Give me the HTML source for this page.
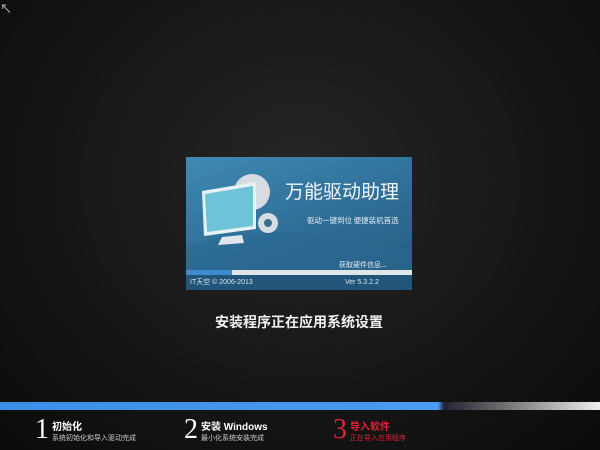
<!DOCTYPE html>
<html><head><meta charset="utf-8"><style>
*{margin:0;padding:0}
body{width:600px;height:450px;overflow:hidden;background:radial-gradient(ellipse at 50% 40%,#262626 0%,#151515 60%,#0b0b0b 100%);position:relative;font-family:"Liberation Sans","Noto Sans CJK SC",sans-serif;color:#fff}
.splash{position:absolute;left:186px;top:157px;width:226px;height:133px;background:linear-gradient(160deg,#3f8ab3 0%,#2f6f98 50%,#25597e 100%);overflow:hidden}
.bar{position:absolute;left:0;top:113px;width:226px;height:5px;background:#dfe6ea}
.bar i{position:absolute;left:0;top:0;width:46px;height:5px;background:#3d8ad0}
.foot{position:absolute;left:0;top:118px;width:226px;height:15px;background:#22557a;font-size:7px;color:#d8e6ef;line-height:15px}
.main{position:absolute;left:215px;top:312px;font-size:14px;font-weight:bold;color:#f2f2f2;white-space:nowrap}
.pb{position:absolute;left:0;top:402px;width:600px;height:8px;background:linear-gradient(90deg,#3a8fe6 0,#4a9bf0 73%,#223 74%,#777 85%,#eee 100%)}
.step{position:absolute;top:416px}
.n{position:absolute;font-family:"Liberation Serif",serif;font-size:28px;line-height:28px}
.t{position:absolute;left:17px;top:2px;font-size:10px;font-weight:bold;white-space:nowrap}
.s{position:absolute;left:17px;top:17px;font-size:7px;white-space:nowrap;color:#ccc}
</style></head><body>
<div style="position:absolute;left:0;top:0;width:12px;height:14px;color:#ccc;font-size:12px">↖</div>
<div class="splash">
 <svg width="226" height="113" style="position:absolute;left:0;top:0">
  <path d="M0 90 Q80 60 226 95 L226 113 L0 113Z" fill="#2a6890" opacity=".5"/>
  <g fill="#d6dde2"><circle cx="66" cy="35" r="18"/><circle cx="82" cy="66" r="10"/></g>
  <circle cx="82" cy="66" r="4" fill="#3a6f92"/>
  <path d="M16 34 L70 25 L70 72 L18 79Z" fill="#e8f1f5"/>
  <path d="M19 37 L67 29 L67 69 L21 75Z" fill="#6fc3d9"/>
  <path d="M36 80 L56 78 L58 86 L32 88Z" fill="#dfe7ec"/>
  <text x="99" y="41" font-size="19" fill="#f3f6f8" font-family="Noto Sans CJK SC,sans-serif">万能驱动助理</text>
  <text x="121" y="66" font-size="7.5" fill="#e6eef3" font-family="Noto Sans CJK SC,sans-serif">驱动一键到位 便捷装机首选</text>
  <text x="153" y="110" font-size="7" fill="#e6eef3" font-family="Noto Sans CJK SC,sans-serif">获取硬件信息...</text>
 </svg>
 <div class="bar"><i></i></div>
 <div class="foot"><span style="position:absolute;left:4px">IT天空 © 2006-2013</span><span style="position:absolute;left:159px">Ver 5.3.2.2</span></div>
</div>
<div class="main">安装程序正在应用系统设置</div>
<div class="pb"></div>
<div class="step" style="left:35px"><div class="n">1</div><div class="t">初始化</div><div class="s">系统初始化和导入驱动完成</div></div>
<div class="step" style="left:184px"><div class="n">2</div><div class="t">安装 Windows</div><div class="s">最小化系统安装完成</div></div>
<div class="step" style="left:333px;color:#e0233a"><div class="n">3</div><div class="t">导入软件</div><div class="s" style="color:#e0233a">正在导入应用程序</div></div>
</body></html>
